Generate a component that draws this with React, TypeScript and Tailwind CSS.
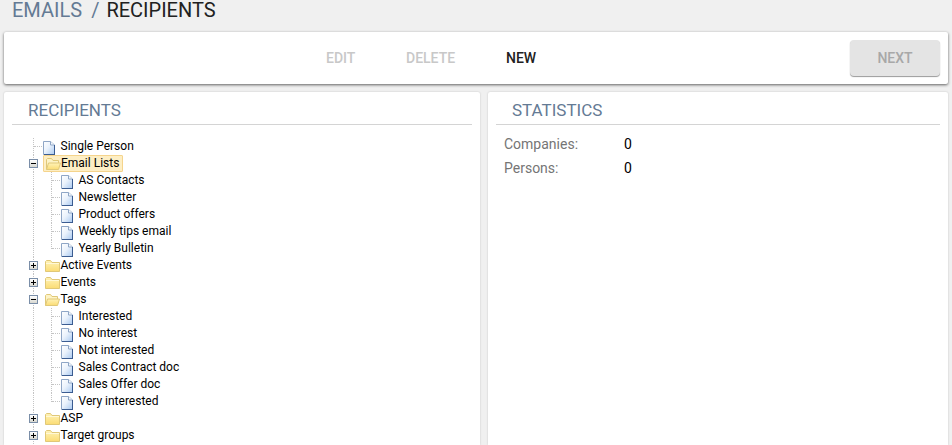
import React from 'react';

const FileIcon: React.FC = () => (
  <svg width="14" height="16" viewBox="0 0 14 16" className="shrink-0">
    <defs>
      <linearGradient id="fileFill" x1="0" y1="0" x2="1" y2="1">
        <stop offset="0" stopColor="#ffffff" />
        <stop offset="0.45" stopColor="#eaf2fc" />
        <stop offset="1" stopColor="#a9c9f0" />
      </linearGradient>
    </defs>
    <path d="M1.5 2.5H8.5L12.5 6V15.5H1.5Z" fill="url(#fileFill)" stroke="#8fa6c6" />
    <path d="M8.5 2.5V6H12.5" fill="#f4f8fd" stroke="#8fa6c6" />
    <path d="M2 15.5H13" stroke="#3b5c91" />
    <path d="M12.5 6V16" stroke="#3b5c91" />
  </svg>
);

const FolderIcon: React.FC<{ open?: boolean }> = ({ open }) => (
  <svg width="16" height="14" viewBox="0 0 16 14" className="shrink-0">
    <defs>
      <linearGradient id="folderFill" x1="0" y1="0" x2="0" y2="1">
        <stop offset="0" stopColor="#fff3b8" />
        <stop offset="1" stopColor="#fbdc74" />
      </linearGradient>
    </defs>
    {open ? (
      <>
        <path d="M1.5 12.5V2.5L2.5 1.5H6.5L8 3.5H13.5V6" fill="#fdf3c6" stroke="#e0c878" />
        <path d="M1.5 12.5L3.5 6H15.5L13.5 12.5Z" fill="url(#folderFill)" stroke="#e0c878" />
      </>
    ) : (
      <>
        <path d="M1.5 12.5V2.5L2.5 1.5H6.5L8 3.5H15.5V12.5Z" fill="url(#folderFill)" stroke="#e0c878" />
        <path d="M2 4.5H15" stroke="#fff8d6" />
      </>
    )}
  </svg>
);

const Expander: React.FC<{ open: boolean }> = ({ open }) => (
  <span className="relative z-10 flex h-[9px] w-[9px] items-center justify-center border border-[#7a8ea8] bg-gradient-to-b from-white to-[#d8d8d0]">
    <span className="absolute h-px w-[5px] bg-black" />
    {!open && <span className="absolute h-[5px] w-px bg-black" />}
  </span>
);

// one indent cell of the tree, draws the dotted guide lines
const Guide: React.FC<{ stub?: boolean; last?: boolean }> = ({ stub, last }) => (
  <span className="relative h-[17px] w-[18px] shrink-0">
    <span className={`absolute left-[9px] top-0 border-l border-dotted border-[#c4c4c4] ${last ? 'h-[9px]' : 'h-[17px]'}`} />
    {stub && <span className="absolute left-[10px] top-[8px] w-[8px] border-t border-dotted border-[#c4c4c4]" />}
  </span>
);

const FileRow: React.FC<{ label: string; child?: boolean; last?: boolean }> = ({ label, child, last }) => (
  <div className="flex h-[17px] items-center">
    {child ? (
      <>
        <Guide />
        <Guide stub last={last} />
      </>
    ) : (
      <Guide stub />
    )}
    <FileIcon />
    <span className="ml-[4.5px] whitespace-nowrap">{label}</span>
  </div>
);

const FolderRow: React.FC<{ label: string; open?: boolean; selected?: boolean }> = ({ label, open = false, selected }) => (
  <div className="flex h-[17px] items-center">
    <span className="relative flex h-[17px] w-[18px] shrink-0 items-center justify-center">
      <span className="absolute left-[9px] top-0 h-[17px] border-l border-dotted border-[#c4c4c4]" />
      <Expander open={open} />
    </span>
    {selected ? (
      <span className="ml-[1px] flex h-[17px] items-center rounded-[1px] border border-[#f5d48c] bg-[#fdeec4] pr-[3px] pl-[1px]">
        <FolderIcon open={open} />
        <span className="whitespace-nowrap">{label}</span>
      </span>
    ) : (
      <>
        <span className="ml-[2px]">
          <FolderIcon open={open} />
        </span>
        <span className="ml-[0.5px] whitespace-nowrap">{label}</span>
      </>
    )}
  </div>
);

const App: React.FC = () => {
  const emailLists = ['AS Contacts', 'Newsletter', 'Product offers', 'Weekly tips email', 'Yearly Bulletin'];
  const tags = ['Interested', 'No interest', 'Not interested', 'Sales Contract doc', 'Sales Offer doc', 'Very interested'];

  return (
    <div className="flex h-[445px] w-[952px] flex-col overflow-hidden bg-[#f0f0f0] font-['Roboto',sans-serif]">
      <div className="flex h-[32px] items-start pl-[12px] text-[20px] leading-[20px]">
        <span className="text-[#647a94]">EMAILS</span>
        <span className="mr-[7px] ml-[9px] text-[#647a94]">/</span>
        <span className="text-[#212121]">RECIPIENTS</span>
      </div>

      <div className="relative z-10 mx-[4px] flex h-[52px] shrink-0 items-center rounded-[2px] bg-white shadow-[0_1px_3px_rgba(0,0,0,0.6)]">
        <div className="ml-[322px] flex text-[14px] font-medium">
          <span className="w-[80px] text-[#c8c8c8]">EDIT</span>
          <span className="w-[100px] text-[#c8c8c8]">DELETE</span>
          <span className="text-[#212121]">NEW</span>
        </div>
        <div className="mr-[8px] ml-auto flex h-[36px] w-[90px] items-center justify-center rounded-[4px] bg-[#e4e4e4] text-[14px] font-medium text-[#a8a8a8] shadow-[0_1px_1px_rgba(0,0,0,0.4)]">
          NEXT
        </div>
      </div>

      <div className="mt-[8px] flex min-h-0 flex-1 gap-[8px] px-[4px]">
        <div className="w-[476px] shrink-0 rounded-t-[2px] bg-white px-[8px] shadow-[0_0_2px_rgba(0,0,0,0.2)]">
          <div className="h-[33px] border-b border-[#d4d4d4] pt-[8px] pl-[16px] text-[17px] leading-[20px] text-[#647a94]">
            RECIPIENTS
          </div>
          <div className="pt-[13px] pl-[12px] text-[12px] leading-[17px] text-black">
            <FileRow label="Single Person" />
            <FolderRow label="Email Lists" open selected />
            {emailLists.map((item, i) => (
              <FileRow key={item} label={item} child last={i === emailLists.length - 1} />
            ))}
            <FolderRow label="Active Events" />
            <FolderRow label="Events" />
            <FolderRow label="Tags" open />
            {tags.map((item, i) => (
              <FileRow key={item} label={item} child last={i === tags.length - 1} />
            ))}
            <FolderRow label="ASP" />
            <FolderRow label="Target groups" />
          </div>
        </div>

        <div className="flex-1 rounded-t-[2px] bg-white px-[8px] shadow-[0_0_2px_rgba(0,0,0,0.2)]">
          <div className="h-[33px] border-b border-[#d4d4d4] pt-[8px] pl-[16px] text-[17px] leading-[20px] text-[#647a94]">
            STATISTICS
          </div>
          <div className="pt-[7px] pl-[8px] text-[14px] leading-[24px]">
            <div className="flex">
              <span className="w-[120px] text-[#757575]">Companies:</span>
              <span className="text-black">0</span>
            </div>
            <div className="flex">
              <span className="w-[120px] text-[#757575]">Persons:</span>
              <span className="text-black">0</span>
            </div>
          </div>
        </div>
      </div>
    </div>
  );
};

export default App;
